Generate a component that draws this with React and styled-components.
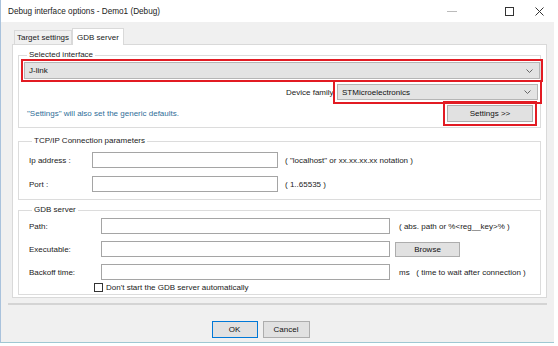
import styled, { createGlobalStyle, css } from "styled-components";

const GlobalStyle = createGlobalStyle`
	html, body {
		margin: 0;
		background: #fff;
	}
	body {
		font-family: "Liberation Sans", Arial, sans-serif;
		font-size: 8px;
		color: #1a1a1a;
	}
	* {
		box-sizing: border-box;
	}
`;
const Window = styled.div`
	width: 554px;
	height: 343px;
	display: flex;
	flex-direction: column;
	border-left: 1px solid #a9c2dc;
	border-bottom: 1px solid #9fc7d2;
	background: #f0f0f0;
`;
const TitleBar = styled.div`
	height: 22px;
	display: flex;
	align-items: center;
	background: #fff;
	padding-left: 7px;
	font-size: 8.2px;
	color: #222;
`;
const Title = styled.div`
	flex: 1;
`;
const WinButton = styled.div`
	width: 30px;
	height: 22px;
	display: flex;
	align-items: center;
	justify-content: center;
`;
const Body = styled.div`
	flex: 1;
	display: flex;
	flex-direction: column;
	padding: 5px 7px 0 11px;
`;
const TabRow = styled.div`
	display: flex;
	align-items: flex-end;
	height: 17px;
	padding-left: 2px;
`;
const Tab = styled.div`
	display: flex;
	align-items: center;
	height: 14px;
	padding: 0 2px;
	border: 1px solid #d9d9d9;
	border-bottom: none;
	background: #f0f0f0;
	${p => p.active && css`
		height: 17px;
		background: #fff;
		margin-bottom: -1px;
		position: relative;
		z-index: 1;
		padding: 0 4px;
	`}
`;
const Pane = styled.div`
	width: 535px;
	height: 254px;
	background: #fff;
	border: 1px solid #d9d9d9;
	padding: 0 5px;
	display: flex;
	flex-direction: column;
`;
const Group = styled.fieldset`
	margin: ${p => p.top}px 0 0 0;
	padding: ${p => p.pad};
	border: 1px solid #dcdcdc;
	display: flex;
	flex-direction: column;
	gap: ${p => p.gap}px;
	min-width: 0;
	legend {
		padding: 0 2px;
		margin-left: 3px;
		line-height: 10px;
		color: #222;
	}
`;
const Row = styled.div`
	display: flex;
	align-items: center;
	height: ${p => p.h || 16}px;
	justify-content: ${p => p.justify || "flex-start"};
`;
const Combo = styled.div`
	display: flex;
	align-items: center;
	justify-content: space-between;
	width: ${p => p.w}px;
	height: ${p => p.h}px;
	background: #e3e3e3;
	border: 1px solid #b5b5b5;
	padding: 0 6px 0 4px;
	outline: 2px solid #e21b23;
	outline-offset: ${p => p.off}px;
	color: #111;
`;
const FieldLabel = styled.div`
	width: ${p => p.w}px;
	color: #222;
`;
const Input = styled.div`
	width: ${p => p.w}px;
	height: 16px;
	background: #fff;
	border: 1px solid #a5a5a5;
`;
const Hint = styled.div`
	margin-left: ${p => p.ml}px;
	color: #222;
	white-space: pre;
`;
const Note = styled.div`
	flex: 1;
	padding-left: 3px;
	color: #2f6e98;
`;
const Button = styled.div`
	display: flex;
	align-items: center;
	justify-content: center;
	width: ${p => p.w}px;
	height: ${p => p.h || 17}px;
	background: #e1e1e1;
	border: 1px solid ${p => (p.primary ? "#0078d7" : "#adadad")};
	color: #111;
	${p => p.marked && css`
		outline: 2px solid #e21b23;
		outline-offset: 2px;
	`}
`;
const Check = styled.div`
	width: 9px;
	height: 9px;
	border: 1px solid #333;
	background: #fff;
	margin: 0 3px 0 65px;
`;
const Separator = styled.div`
	height: 2px;
	margin: 5px 0 0 -4px;
	width: 539px;
	background: #d4d4d4;
`;
const Footer = styled.div`
	display: flex;
	justify-content: center;
	gap: 5px;
	padding: 16px 0 0 0;
	margin-left: -38px;
`;

function Chevron(){
	return(
		<svg width = "7" height = "4" viewBox = "0 0 7 4">
			<polyline points = "0.5,0.5 3.5,3.5 6.5,0.5" fill = "none" stroke = "#666" strokeWidth = "1"/>
		</svg>
	);
};

export default function App(){
	return(
		<>
			<GlobalStyle/>
			<Window>
				<TitleBar>
					<Title>Debug interface options - Demo1 (Debug)</Title>
					<WinButton>
						<svg width = "10" height = "1"><line x1 = "0" y1 = "0.5" x2 = "10" y2 = "0.5" stroke = "#bbb"/></svg>
					</WinButton>
					<WinButton style = {{marginLeft: 27}}>
						<svg width = "9" height = "9"><rect x = "0.5" y = "0.5" width = "8" height = "8" fill = "none" stroke = "#333"/></svg>
					</WinButton>
					<WinButton>
						<svg width = "9" height = "9"><path d = "M0.5 0.5 L8.5 8.5 M8.5 0.5 L0.5 8.5" stroke = "#333"/></svg>
					</WinButton>
				</TitleBar>
				<Body>
					<TabRow>
						<Tab>Target settings</Tab>
						<Tab active>GDB server</Tab>
					</TabRow>
					<Pane>
						<Group top = {5} pad = "2px 2px 5px 5px" gap = {5}>
							<legend>Selected interface</legend>
							<Combo w = {516} h = {17} off = {1}>
								<span>J-link</span>
								<Chevron/>
							</Combo>
							<Row h = {16} justify = "flex-end">
								<FieldLabel w = {51}>Device family</FieldLabel>
								<Combo w = {201} h = {16} off = {2}>
									<span>STMicroelectronics</span>
									<Chevron/>
								</Combo>
							</Row>
							<Row h = {17}>
								<Note>"Settings" will also set the generic defaults.</Note>
								<Button w = {86} marked style = {{marginRight: 5}}>Settings &gt;&gt;</Button>
							</Row>
						</Group>
						<Group top = {8} pad = "6px 0 7px 10px" gap = {8}>
							<legend>TCP/IP Connection parameters</legend>
							<Row>
								<FieldLabel w = {63}>Ip address :</FieldLabel>
								<Input w = {186}/>
								<Hint ml = {7}>( "localhost" or xx.xx.xx.xx notation )</Hint>
							</Row>
							<Row>
								<FieldLabel w = {63}>Port :</FieldLabel>
								<Input w = {186}/>
								<Hint ml = {7}>( 1..65535 )</Hint>
							</Row>
						</Group>
						<Group top = {5} pad = "3px 0 2px 10px" gap = {7}>
							<legend>GDB server</legend>
							<Row>
								<FieldLabel w = {72}>Path:</FieldLabel>
								<Input w = {289}/>
								<Hint ml = {9}>( abs. path or %&lt;reg__key&gt;% )</Hint>
							</Row>
							<Row>
								<FieldLabel w = {72}>Executable:</FieldLabel>
								<Input w = {289}/>
								<Button w = {65} h = {15} style = {{marginLeft: 5}}>Browse</Button>
							</Row>
							<Row>
								<FieldLabel w = {72}>Backoff time:</FieldLabel>
								<Input w = {289}/>
								<Hint ml = {9}>ms   ( time to wait after connection )</Hint>
							</Row>
							<Row h = {10} style = {{marginTop: -5}}>
								<Check/>
								<span>Don't start the GDB server automatically</span>
							</Row>
						</Group>
					</Pane>
					<Separator/>
					<Footer>
						<Button w = {46} primary>OK</Button>
						<Button w = {47}>Cancel</Button>
					</Footer>
				</Body>
			</Window>
		</>
	);
};
